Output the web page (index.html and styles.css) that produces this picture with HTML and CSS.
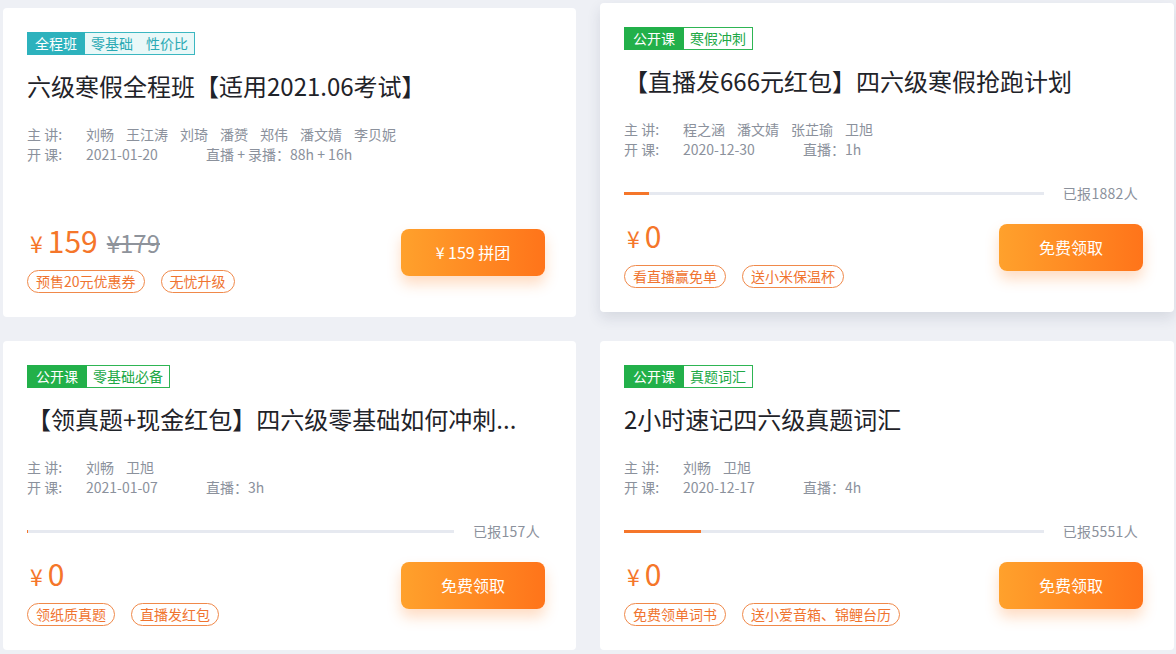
FILE: index.html
```html
<!DOCTYPE html>
<html lang="zh-CN">
<head>
<meta charset="utf-8">
<title>课程列表</title>
<link rel="stylesheet" href="styles.css">
</head>
<body>
<div class="grid">
  <div class="card">
    <div class="tag tag-teal"><span class="tag-main">全程班</span><span class="tag-sub"><span>零基础</span><span>性价比</span></span></div>
    <h2 class="title">六级寒假全程班【适用2021.06考试】</h2>
    <div class="meta">
      <div class="meta-row"><span class="label">主 讲:</span><span class="names"><span>刘畅</span><span>王江涛</span><span>刘琦</span><span>潘赟</span><span>郑伟</span><span>潘文婧</span><span>李贝妮</span></span></div>
      <div class="meta-row"><span class="label">开 课:</span><span class="date">2021-01-20</span><span>直播 + 录播：88h + 16h</span></div>
    </div>
    <div class="foot">
      <div class="foot-left">
        <div class="price"><span class="yen">¥</span><span class="num">159</span><span class="old">¥179</span></div>
        <div class="coupons"><span class="coupon">预售20元优惠券</span><span class="coupon">无忧升级</span></div>
      </div>
      <div class="btn">¥ 159 拼团</div>
    </div>
  </div>

  <div class="card raised">
    <div class="tag tag-green"><span class="tag-main">公开课</span><span class="tag-sub"><span>寒假冲刺</span></span></div>
    <h2 class="title">【直播发666元红包】四六级寒假抢跑计划</h2>
    <div class="meta">
      <div class="meta-row"><span class="label">主 讲:</span><span class="names"><span>程之涵</span><span>潘文婧</span><span>张芷瑜</span><span>卫旭</span></span></div>
      <div class="meta-row"><span class="label">开 课:</span><span class="date">2020-12-30</span><span>直播：1h</span></div>
    </div>
    <div class="progress"><div class="bar"><div class="fill" style="width:6%"></div></div><span class="count">已报1882人</span></div>
    <div class="foot">
      <div class="foot-left">
        <div class="price"><span class="yen">¥</span><span class="num">0</span></div>
        <div class="coupons"><span class="coupon">看直播赢免单</span><span class="coupon">送小米保温杯</span></div>
      </div>
      <div class="btn">免费领取</div>
    </div>
  </div>

  <div class="card">
    <div class="tag tag-green"><span class="tag-main">公开课</span><span class="tag-sub"><span>零基础必备</span></span></div>
    <h2 class="title">【领真题+现金红包】四六级零基础如何冲刺...</h2>
    <div class="meta">
      <div class="meta-row"><span class="label">主 讲:</span><span class="names"><span>刘畅</span><span>卫旭</span></span></div>
      <div class="meta-row"><span class="label">开 课:</span><span class="date">2021-01-07</span><span>直播：3h</span></div>
    </div>
    <div class="progress"><div class="bar"><div class="fill" style="width:0.3%"></div></div><span class="count">已报157人</span></div>
    <div class="foot">
      <div class="foot-left">
        <div class="price"><span class="yen">¥</span><span class="num">0</span></div>
        <div class="coupons"><span class="coupon">领纸质真题</span><span class="coupon">直播发红包</span></div>
      </div>
      <div class="btn">免费领取</div>
    </div>
  </div>

  <div class="card">
    <div class="tag tag-green"><span class="tag-main">公开课</span><span class="tag-sub"><span>真题词汇</span></span></div>
    <h2 class="title">2小时速记四六级真题词汇</h2>
    <div class="meta">
      <div class="meta-row"><span class="label">主 讲:</span><span class="names"><span>刘畅</span><span>卫旭</span></span></div>
      <div class="meta-row"><span class="label">开 课:</span><span class="date">2020-12-17</span><span>直播：4h</span></div>
    </div>
    <div class="progress"><div class="bar"><div class="fill" style="width:18.3%"></div></div><span class="count">已报5551人</span></div>
    <div class="foot">
      <div class="foot-left">
        <div class="price"><span class="yen">¥</span><span class="num">0</span></div>
        <div class="coupons"><span class="coupon">免费领单词书</span><span class="coupon">送小爱音箱、锦鲤台历</span></div>
      </div>
      <div class="btn">免费领取</div>
    </div>
  </div>
</div>
</body>
</html>
```

FILE: styles.css
```css
* { box-sizing: border-box; }
html, body { margin: 0; padding: 0; }
body {
  background: #eef0f5;
  font-family: "Noto Sans CJK SC", "Noto Sans", sans-serif;
  width: 1176px;
  height: 654px;
  overflow: hidden;
}
.grid {
  display: grid;
  grid-template-columns: 573px 574px;
  grid-template-rows: 309px 309px;
  column-gap: 24px;
  row-gap: 24px;
  padding: 8px 2px 0 3px;
}
.card {
  background: #fff;
  border-radius: 4px;
  padding: 24px 31px 24px 24px;
  display: flex;
  flex-direction: column;
}
.raised {
  transform: translateY(-5px);
  box-shadow: 0 6px 14px rgba(40, 50, 80, 0.12);
}
.tag {
  display: flex;
  align-self: flex-start;
  height: 23px;
  font-size: 14px;
  line-height: 21px;
}
.tag-main {
  padding: 0 7px;
  color: #fff;
  border: 1px solid;
}
.tag-sub {
  display: flex;
  gap: 13px;
  padding: 0 6px;
  border: 1px solid;
  border-left: none;
}
.tag-teal .tag-main { background: #2db2bd; border-color: #2db2bd; }
.tag-teal .tag-sub { background: #e9f8f8; border-color: #3bb7c1; color: #2aa9b4; }
.tag-green .tag-main { background: #22b04a; border-color: #22b04a; padding: 0 8px; }
.tag-green .tag-sub { background: #fff; border-color: #2eb553; color: #20a845; }
.title {
  margin: 15px 0 0;
  font-size: 24px;
  line-height: 32px;
  font-weight: 400;
  color: #1f2329;
  white-space: nowrap;
}
.meta {
  margin-top: 22px;
  font-size: 14px;
  line-height: 20px;
  color: #8b919c;
}
.meta-row { display: flex; }
.label { width: 59px; }
.names { display: flex; gap: 12px; }
.date { width: 120px; }
.progress {
  display: flex;
  align-items: center;
  gap: 19px;
  margin-top: 24px;
  margin-right: 5px;
  height: 20px;
}
.bar {
  flex: 1;
  height: 3px;
  background: #e6e9f0;
}
.fill {
  height: 3px;
  background: #f5762a;
}
.count {
  font-size: 14px;
  letter-spacing: 0.3px;
  color: #8b919c;
}
.foot {
  margin-top: auto;
  display: flex;
  justify-content: space-between;
  align-items: flex-start;
}
.price {
  display: flex;
  align-items: baseline;
  height: 36px;
  padding-left: 3px;
  color: #f5762a;
}
.yen { font-size: 23px; margin-right: 5px; }
.num { font-size: 30px; line-height: 36px; }
.old {
  margin-left: 9px;
  font-size: 24px;
  color: #8e939b;
  text-decoration: line-through;
  text-decoration-thickness: 2px;
}
.coupons {
  display: flex;
  gap: 16px;
  margin-top: 12px;
}
.coupon {
  height: 23px;
  line-height: 21px;
  padding: 0 8px;
  border: 1px solid #f0894a;
  border-radius: 12px;
  color: #f07430;
  font-size: 14px;
}
.btn {
  margin-top: 7px;
  width: 144px;
  height: 47px;
  border-radius: 8px;
  background: linear-gradient(90deg, #ffa12c, #ff741a);
  color: #fff;
  font-size: 16px;
  line-height: 47px;
  text-align: center;
  box-shadow: 0 8px 14px rgba(255, 130, 40, 0.28);
}
```
